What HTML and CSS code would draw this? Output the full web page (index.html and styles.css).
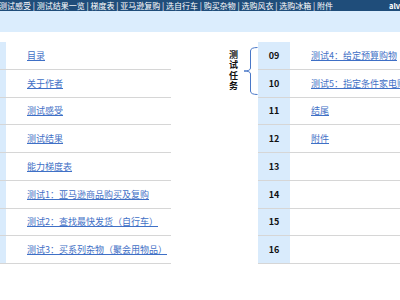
FILE: index.html
```html
<!DOCTYPE html>
<html lang="zh">
<head>
<meta charset="utf-8">
<title>目录</title>
<link rel="stylesheet" href="styles.css">
</head>
<body>
<div class="topbar">
  <nav class="nav">测试感受 | 测试结果一览 | 梯度表 | 亚马逊复购 | 选自行车 | 购买杂物 | 选购风衣 | 选购冰箱 | 附件</nav>
  <span class="user">alvin</span>
</div>
<div class="band"></div>
<div class="main">
  <div class="toc">
    <div class="row"><div class="num">01</div><div class="cell"><a href="#">目录</a></div></div>
    <div class="row"><div class="num">02</div><div class="cell"><a href="#">关于作者</a></div></div>
    <div class="row"><div class="num">03</div><div class="cell"><a href="#">测试感受</a></div></div>
    <div class="row"><div class="num">04</div><div class="cell"><a href="#">测试结果</a></div></div>
    <div class="row"><div class="num">05</div><div class="cell"><a href="#">能力梯度表</a></div></div>
    <div class="row"><div class="num">06</div><div class="cell"><a href="#">测试1：亚马逊商品购买及复购</a></div></div>
    <div class="row"><div class="num">07</div><div class="cell"><a href="#">测试2：查找最快发货（自行车）</a></div></div>
    <div class="row"><div class="num">08</div><div class="cell"><a href="#">测试3：买系列杂物（聚会用物品）</a></div></div>
  </div>
  <div class="group">
    <div class="label">测<br>试<br>任<br>务</div>
    <svg class="brace" width="15" height="50" viewBox="0 0 15 50">
      <path d="M14.5 1.5 Q7.5 1.5 7.5 5 V22 Q7.5 25 1 25 Q7.5 25 7.5 28 V45 Q7.5 48.5 14.5 48.5" fill="none" stroke="#4a78c8" stroke-width="1"/>
    </svg>
  </div>
  <div class="toc toc-right">
    <div class="row"><div class="num">09</div><div class="cell"><a href="#">测试4：给定预算购物</a></div></div>
    <div class="row"><div class="num">10</div><div class="cell"><a href="#">测试5：指定条件家电购买</a></div></div>
    <div class="row"><div class="num">11</div><div class="cell"><a href="#">结尾</a></div></div>
    <div class="row"><div class="num">12</div><div class="cell"><a href="#">附件</a></div></div>
    <div class="row"><div class="num">13</div><div class="cell"></div></div>
    <div class="row"><div class="num">14</div><div class="cell"></div></div>
    <div class="row"><div class="num">15</div><div class="cell"></div></div>
    <div class="row"><div class="num">16</div><div class="cell"></div></div>
  </div>
</div>
</body>
</html>
```

FILE: styles.css
```css
html, body {
  margin: 0;
  padding: 0;
  background: #ffffff;
  overflow: hidden;
  font-family: "Noto Sans CJK SC", "Noto Sans", sans-serif;
}

.topbar {
  display: flex;
  height: 11px;
  background: #1f4d7a;
  color: #ffffff;
  font-size: 8px;
  line-height: 12px;
  white-space: nowrap;
  overflow: hidden;
}

.nav {
  flex: none;
  margin-left: -1px;
}

.user {
  flex: none;
  margin-left: 56px;
  font-size: 7.5px;
  font-weight: bold;
}

.band {
  height: 21px;
  background: #dbedfd;
}

.main {
  display: flex;
  align-items: flex-start;
  margin-top: 10px;
  margin-left: -26px;
}

.toc {
  flex: none;
  width: 197px;
}

.toc-right {
  width: 200px;
}

.row {
  display: flex;
  height: 27.75px;
  box-sizing: border-box;
  border-bottom: 1px solid #d6d6d6;
}

.num {
  flex: none;
  width: 32px;
  background: #d9ebfc;
  display: flex;
  align-items: center;
  justify-content: center;
  font-size: 9px;
  font-weight: bold;
  color: #111111;
}

.cell {
  flex: 1;
  display: flex;
  align-items: center;
  padding-left: 21px;
  white-space: nowrap;
  overflow: hidden;
}

.cell a {
  font-size: 9px;
  color: #3f70c6;
  text-decoration: underline;
}

.group {
  flex: none;
  width: 87px;
  height: 55.5px;
  display: flex;
  align-items: center;
  box-sizing: border-box;
  padding-left: 58px;
}

.label {
  width: 9px;
  font-size: 9px;
  line-height: 10.5px;
  font-weight: bold;
  color: #111111;
  margin-top: 2px;
}

.brace {
  display: block;
  margin-left: 5px;
  margin-top: 2px;
}
```
